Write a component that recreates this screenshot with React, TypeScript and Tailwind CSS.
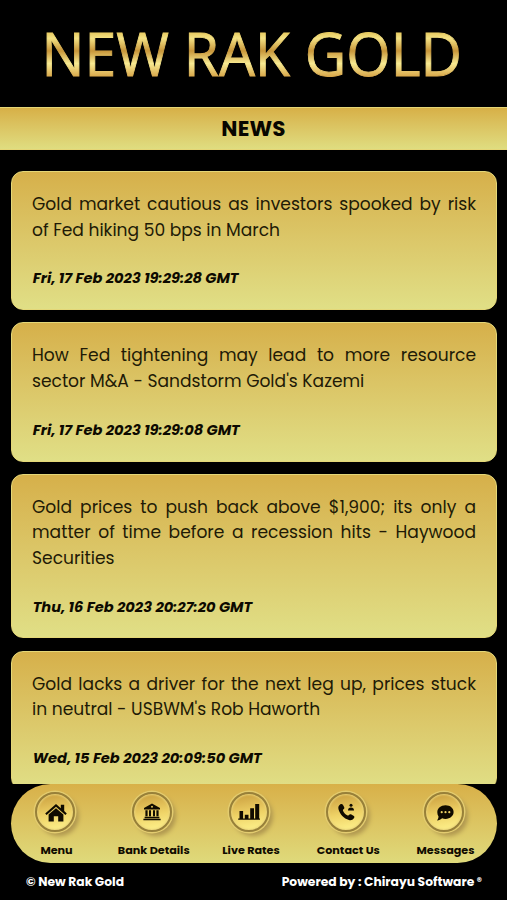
import React from "react";

type Line = { text: string; fill?: boolean };
type NewsItem = { lines: Line[]; date: string };

const news: NewsItem[] = [
  {
    lines: [
      { text: "Gold market cautious as investors spooked by risk", fill: true },
      { text: "of Fed hiking 50 bps in March" },
    ],
    date: "Fri, 17 Feb 2023 19:29:28 GMT",
  },
  {
    lines: [
      { text: "How Fed tightening may lead to more resource", fill: true },
      { text: "sector M&A - Sandstorm Gold's Kazemi" },
    ],
    date: "Fri, 17 Feb 2023 19:29:08 GMT",
  },
  {
    lines: [
      { text: "Gold prices to push back above $1,900; its only a", fill: true },
      { text: "matter of time before a recession hits - Haywood", fill: true },
      { text: "Securities" },
    ],
    date: "Thu, 16 Feb 2023 20:27:20 GMT",
  },
  {
    lines: [
      { text: "Gold lacks a driver for the next leg up, prices stuck", fill: true },
      { text: "in neutral - USBWM's Rob Haworth" },
    ],
    date: "Wed, 15 Feb 2023 20:09:50 GMT",
  },
];

const HomeIcon = () => (
  <svg viewBox="0 0 24 20" className="mt-[2px] ml-[2px] h-[20px] w-[24px] shrink-0" fill="#100b00">
    <path d="M12 1 1.2 10.4l1.4 1.5L12 3.8l9.4 8.1 1.4-1.5-2.6-2.3V1.8h-3.4v3.4z" />
    <path d="M12 5.2 4.6 11.6V18.6h5.2v-5.3h4.4v5.3h5.2v-7z" />
  </svg>
);

const BankIcon = () => (
  <svg viewBox="0 0 20 20" className="ml-px h-[20px] w-[20px] shrink-0" fill="#100b00">
    <path fillRule="evenodd" d="M10 1.5 18 6v1.6H2V6zm0 2.3a1 1 0 1 0 0 2 1 1 0 0 0 0-2z" />
    <path d="M3.4 8.3h2.2v6H3.4zM7 8.3h2v6H7zM11 8.3h2v6h-2zM14.4 8.3h2.2v6h-2.2zM2.6 14.8h14.8v1.4H2.6zM1.4 16.8h17.2v1.5H1.4z" />
  </svg>
);

const ChartIcon = () => (
  <svg viewBox="0 0 24 20" className="h-[20px] w-[24px] shrink-0" fill="#100b00">
    <path d="M2.5 9h3.6v7.4h1.7v-3.6h3.7v3.6h1.7V6.2h3.8v10.2h1.2V2h4v14.4h.8v1.3H1.2v-1.3h1.3z" />
  </svg>
);

const PhoneIcon = () => (
  <svg viewBox="0 0 20 20" className="ml-px h-[20px] w-[20px] shrink-0" fill="#100b00">
    <path d="M3.1 2.4c1.2-.9 2.2-.5 2.8.4l1.2 2.1c.5 1 .2 1.8-.6 2.4-.6.4-.7 1-.4 1.7.8 1.7 2.2 3.3 4.1 4.3.7.4 1.2.3 1.7-.3.7-.8 1.5-1 2.5-.5l2.1 1.2c1 .6 1.2 1.5.4 2.6-1.2 1.7-2.9 2.3-5 1.7C6.9 16.5 2.8 12 1.5 7.2 1 5.2 1.5 3.5 3.1 2.4z" />
    <circle cx="14" cy="3.3" r="1.5" />
    <path d="M11 8.4c.1-2 1-2.8 3-2.8s2.9.8 3 2.8z" />
  </svg>
);

const MessageIcon = () => (
  <svg viewBox="0 0 20 20" className="mt-[2px] ml-[2px] h-[20px] w-[20px] shrink-0">
    <path fill="#100b00" d="M10.5 2.3c4.7 0 8.1 2.9 8.1 6.7s-3.4 6.9-8.1 6.9c-1.2 0-2.3-.2-3.3-.6-1.4 1.2-3.1 2-5.2 2.1 1-1.2 1.5-2.7 1.5-4-.8-1.2-1.2-2.7-1.2-4.2C2.3 5.2 5.8 2.3 10.5 2.3z" />
    <g fill="#f0d465">
      <circle cx="6.7" cy="9.2" r="1.1" />
      <circle cx="10.5" cy="9.2" r="1.1" />
      <circle cx="14.3" cy="9.2" r="1.1" />
    </g>
  </svg>
);

const tabs = [
  { label: "Menu", Icon: HomeIcon },
  { label: "Bank Details", Icon: BankIcon },
  { label: "Live Rates", Icon: ChartIcon },
  { label: "Contact Us", Icon: PhoneIcon },
  { label: "Messages", Icon: MessageIcon },
];

function NewsCard({ item }: { item: NewsItem }) {
  return (
    <article className="shrink-0 rounded-[12px] border border-[#e4d778] bg-linear-to-b from-[#d6b04a] to-[#e0df86] px-[20px] pt-[20px] pb-[17.200px] text-[#211a06]">
      {item.lines.map((line) => (
        <p
          key={line.text}
          className={`h-[25.600px] text-[17.100px] leading-[25.600px] whitespace-nowrap ${line.fill ? "[text-align-last:justify]" : ""}`}
        >
          {line.text}
        </p>
      ))}
      <p className="mt-[23.200px] h-[25.600px] pl-[0.700px] text-[14.600px] leading-[25.600px] font-bold whitespace-nowrap text-[#0d0a00] italic">
        {item.date}
      </p>
    </article>
  );
}

export default function App() {
  return (
    <div className="flex h-[900px] w-[507px] flex-col overflow-hidden bg-black font-['Poppins','Inter',sans-serif]">
      <header className="h-[107px] shrink-0">
        <svg viewBox="0 0 507 107" className="h-[107px] w-[507px]">
          <defs>
            <linearGradient id="gold" gradientUnits="userSpaceOnUse" x1="0" y1="32" x2="0" y2="77">
              <stop offset="0" stopColor="#e6c75c" />
              <stop offset="0.14" stopColor="#f4e284" />
              <stop offset="0.42" stopColor="#c8963a" />
              <stop offset="0.7" stopColor="#f8ea91" />
              <stop offset="1" stopColor="#d7a548" />
            </linearGradient>
          </defs>
          <text x="41.500" y="75.700" textLength="420.500" lengthAdjust="spacingAndGlyphs" fontFamily="'Open Sans', 'Noto Sans', sans-serif" fontSize="59.500" fill="url(#gold)" stroke="url(#gold)" strokeWidth="0.900">
            NEW RAK GOLD
          </text>
        </svg>
      </header>

      <h1 className="flex h-[43px] shrink-0 items-center justify-center border-y border-[#e5d575] bg-linear-to-b from-[#d7b047] to-[#dfdd80] pt-[2px] text-[21.500px] font-bold tracking-[0.200px] text-[#080600]">
        NEWS
      </h1>

      <main className="flex h-[634px] shrink-0 flex-col gap-[12.200px] overflow-hidden pt-[21px] pr-[10px] pl-[11px]">
        {news.map((item) => (
          <NewsCard key={item.date} item={item} />
        ))}
      </main>

      <nav className="mr-[10px] ml-[11px] flex h-[79px] shrink-0 justify-between rounded-[40px] bg-linear-to-b from-[#d8b048] to-[#dfda7b] pr-[6px]">
        {tabs.map(({ label, Icon }) => (
          <div key={label} className="flex w-[91px] flex-col items-center pt-[8px]">
            <div className="mr-[4px] flex h-[40px] w-[40px] items-center justify-center rounded-full border-2 border-[#97803a] bg-linear-170 from-[#c89c3c] via-[#efd367] via-55% to-[#fff590] shadow-[0_0_0_1.500px_#e3cc70,4px_4px_4px_#b09850,inset_0_0_2px_1px_#ead47a]">
              <Icon />
            </div>
            <span className="mt-[8.500px] text-[11.200px] leading-[18px] font-bold whitespace-nowrap text-[#100b00]">{label}</span>
          </div>
        ))}
      </nav>

      <footer className="flex h-[37px] shrink-0 items-center justify-between pt-[2px] pr-[25px] pl-[26px] text-[12.300px] font-bold text-white">
        <span>© New Rak Gold</span>
        <span>
          Powered by : Chirayu Software <span className="inline-block -translate-y-px text-[10px]">®</span>
        </span>
      </footer>
    </div>
  );
}
